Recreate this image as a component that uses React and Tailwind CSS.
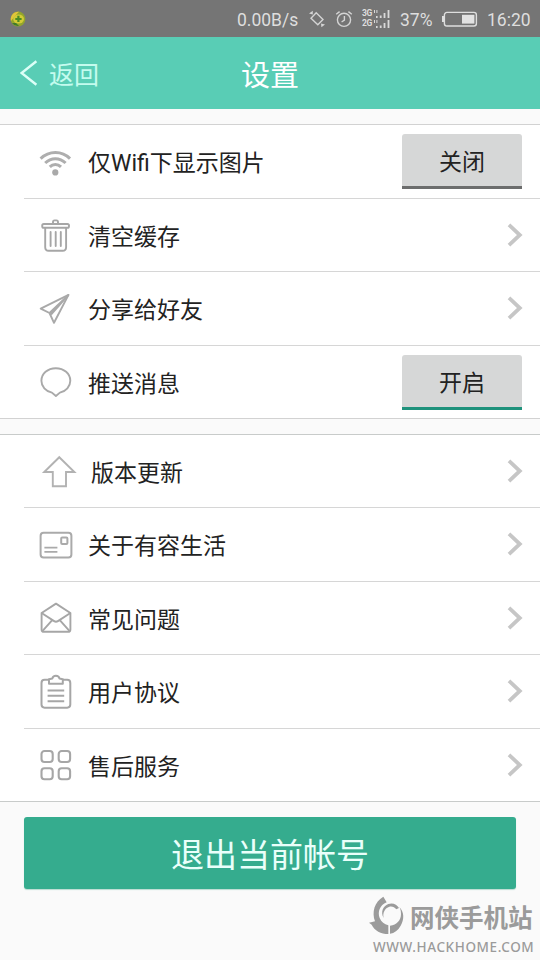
import React from 'react';

function WifiIcon() {
  return (
    <svg className="w-9 h-9" viewBox="0 0 36 36" fill="none" stroke="#aeaeae" strokeWidth="3">
      <path d="M3.6 14.6C12 6.4 25 6.4 33 14.6" />
      <path d="M8.2 19C14 13.2 22.7 13.2 28.6 19" />
      <path d="M12.8 22.9C16 19.8 20.7 19.8 24 22.9" />
      <circle cx="18.3" cy="28.4" r="3.1" fill="#a9a9a9" stroke="none" />
    </svg>
  );
}

function TrashIcon() {
  return (
    <svg className="w-9 h-9" viewBox="0 0 36 36" fill="none" stroke="#a6a6a6" strokeWidth="1.9">
      <path d="M16 6.4V5Q16 3.4 17.5 3.4H19.5Q21 3.4 21 5V6.4" />
      <rect x="5.2" y="7" width="26.8" height="3.8" rx="1.6" />
      <path d="M8.2 11V30.3Q8.2 33.8 11.7 33.8H25.6Q29.1 33.8 29.1 30.3V11" />
      <path d="M13.6 15V29M18.7 15V29M23.8 15V29" strokeLinecap="round" />
    </svg>
  );
}

function PlaneIcon() {
  return (
    <svg className="w-9 h-9" viewBox="0 0 36 36" fill="none" stroke="#a9a9a9" strokeWidth="1.9" strokeLinejoin="round">
      <path d="M31.5 3.9L3.7 17.6L12.5 22L17 31.8Z" />
      <path d="M31.5 3.9L12.5 22M31.5 3.9L14 23.5" />
    </svg>
  );
}

function BubbleIcon() {
  return (
    <svg className="w-9 h-9" viewBox="0 0 36 36" fill="none" stroke="#a9a9a9" strokeWidth="1.9" strokeLinejoin="round">
      <path d="M18.8 4.2C27 4.2 33.3 9.7 33.3 16.7C33.3 22.5 29 27.2 22.9 28.6L18.9 32L14.9 28.6C8.7 27.2 4.4 22.5 4.4 16.7C4.4 9.7 10.7 4.2 18.8 4.2Z" />
    </svg>
  );
}

function UpArrowIcon() {
  return (
    <svg className="w-9 h-9" viewBox="0 0 36 36" fill="none" stroke="#b2b2b2" strokeWidth="1.9">
      <path d="M18.3 4.2L33.4 19H25V33.2H11.8V19H3.2Z" />
    </svg>
  );
}

function CardIcon() {
  return (
    <svg className="w-9 h-9" viewBox="0 0 36 36" fill="none" stroke="#aaaaaa" strokeWidth="2">
      <rect x="3.6" y="5.8" width="30.8" height="24.6" rx="3" />
      <rect x="24.2" y="10.6" width="6.2" height="6.4" rx="1" />
      <path d="M7.4 20.6H20.4M7.4 24.9H20.4" strokeWidth="1.7" />
    </svg>
  );
}

function EnvelopeIcon() {
  return (
    <svg className="w-9 h-9" viewBox="0 0 36 36" fill="none" stroke="#a6a6a6" strokeWidth="1.9" strokeLinejoin="round">
      <path d="M4.6 13L19 3.6L33.4 13V29.4Q33.4 31.8 31 31.8H7Q4.6 31.8 4.6 29.4Z" />
      <path d="M4.6 13L17.1 21.1Q19 22.4 20.9 21.1L33.4 13M5.6 30.8L15 20.4M32.4 30.8L23 20.4" />
    </svg>
  );
}

function ClipboardIcon() {
  return (
    <svg className="w-9 h-9" viewBox="0 0 36 36" fill="none" stroke="#a6a6a6" strokeWidth="2" strokeLinejoin="round">
      <path d="M12 5.8H7.6Q4.5 5.8 4.5 8.9V30.6Q4.5 33.7 7.6 33.7H30.2Q33.3 33.7 33.3 30.6V8.9Q33.3 5.8 30.2 5.8H25.8" />
      <path d="M12 9.8V5.2L15.3 4.6Q15.9 1.8 18.9 1.8Q21.9 1.8 22.5 4.6L25.8 5.2V9.8Z" />
      <path d="M10.6 16.4H27.2M10.6 21.8H27.2M10.6 27.2H27.2" />
    </svg>
  );
}

function GridIcon() {
  return (
    <svg className="w-9 h-9" viewBox="0 0 36 36" fill="none" stroke="#a6a6a6" strokeWidth="2.1">
      <rect x="4.5" y="4" width="11.2" height="11" rx="3" />
      <rect x="21.7" y="4" width="11.4" height="11" rx="3" />
      <rect x="4.5" y="21.2" width="11.2" height="11" rx="3" />
      <rect x="21.7" y="21.2" width="11.4" height="11" rx="3" />
    </svg>
  );
}

function Chevron() {
  return (
    <svg className="w-4 h-6 mr-[17px] mb-px" viewBox="0 0 16 24" fill="none" stroke="#c6c6c6" strokeWidth="3.8">
      <path d="M2 1.8L12.8 12L2 22.2" />
    </svg>
  );
}

function StatusBar() {
  return (
    <div className="h-[37px] bg-[#757575] flex items-center text-[#dedede] text-[17.5px] font-['Roboto',sans-serif]">
      <svg className="w-4 h-4 ml-[10px]" viewBox="0 0 16 16">
        <circle cx="8" cy="8" r="7.4" fill="#93a52c" />
        <path d="M1 10A7.4 7.4 0 0 1 9 .8L5 5Z" fill="#e3c33a" />
        <ellipse cx="8.6" cy="8" rx="5.4" ry="4.6" fill="#d2cb35" />
        <path d="M2 12A7.4 7.4 0 0 0 9 15L6 12Z" fill="#3f7a2a" />
        <path d="M8.4 4.8V11M5.3 8H11.6" stroke="#4b8a24" strokeWidth="2.2" />
      </svg>
      <span className="w-[63px] ml-[211px] pt-[3px] whitespace-nowrap">0.00B/s</span>
      <svg className="w-[18px] h-[18px] ml-2" viewBox="0 0 18 18" fill="none" stroke="#d4d4d4" strokeWidth="1.4">
        <path d="M8.2 2.8L15 9.4L9.8 14.8L3 8.2Z" />
        <path d="M4.8 0.8V4.6L1 3.4ZM13 13.4L17 14.4L13.4 17.2Z" fill="#d4d4d4" stroke="none" />
      </svg>
      <svg className="w-[18px] h-[18px] ml-[9px]" viewBox="0 0 18 18" fill="none" stroke="#d4d4d4" strokeWidth="1.4">
        <circle cx="9" cy="9.8" r="6.6" />
        <path d="M9.4 6V10.2L6.6 12M1.2 4.2L4.6 1.6M16.8 4.2L13.4 1.6" />
      </svg>
      <div className="flex flex-col ml-[9px] w-7">
        {['3G', '2G'].map((label) => (
          <div key={label} className="flex items-center h-[10px]">
            <span className="w-[11px] text-[8.5px] leading-none font-bold tracking-[-0.3px]">{label}</span>
            <svg className="w-[17px] h-2" viewBox="0 0 17 8" fill="#d9d9d9">
              <path d="M1 0H2V3H1ZM3.4 0H4.4V3H3.4ZM3 6H4.6V8H3ZM6.8 5.5H8.6V8H6.8ZM10.6 3H12.4V8H10.6ZM14.6 0H16.4V8H14.6Z" />
            </svg>
          </div>
        ))}
      </div>
      <span className="w-[34px] ml-[10px] pt-[3px]">37%</span>
      <svg className="w-9 h-4 ml-[8px]" viewBox="0 0 36 16" fill="none">
        <rect x="2.4" y="1.4" width="32" height="13.6" rx="2.5" stroke="#dedede" strokeWidth="1.4" />
        <path d="M0 5H2V11H0Z" fill="#dedede" />
        <rect x="20" y="3.8" width="12.4" height="8.8" fill="#e2e2e2" />
      </svg>
      <span className="ml-[9px] pt-[3px]">16:20</span>
    </div>
  );
}

function Header() {
  return (
    <div className="h-[72px] bg-[#59cdb5] grid grid-cols-3 items-center text-white">
      <div className="flex items-center pl-5 text-[#c4fbee]">
        <svg className="w-[18px] h-7" viewBox="0 0 18 28" fill="none" stroke="#dcfff7" strokeWidth="2.4">
          <path d="M16.4 2.2L1.6 14L16.4 25.8" />
        </svg>
        <span className="ml-[11px] pt-[5px] text-[25px] leading-none">返回</span>
      </div>
      <h1 className="pt-1.5 text-[29px] leading-none text-center">设置</h1>
    </div>
  );
}

function ToggleButton({ on }) {
  return (
    <button
      className={`w-[120px] h-[55px] mr-[18px] pt-[5px] rounded-t-[3px] border-b-[3px] bg-[#d6d7d7] text-[23px] leading-none ${
        on ? 'border-[#1f927c]' : 'border-[#6c6d6d]'
      }`}
    >
      {on ? '开启' : '关闭'}
    </button>
  );
}

function Row({ icon, label, toggle, height = 'h-[74px]', last, shift }) {
  return (
    <div className={`${height} pl-6`}>
      <div className={`h-full flex items-center ${last ? '' : 'border-b border-[#d6d6d6]'}`}>
        <div className={shift ? 'ml-[17px]' : 'ml-[13px]'}>{icon}</div>
        <span className={`flex-1 pt-1 text-[23px] leading-none ${shift ? 'ml-[14px]' : 'ml-[15px]'}`}>{label}</span>
        {toggle === undefined ? <Chevron /> : <ToggleButton on={toggle} />}
      </div>
    </div>
  );
}

export default function App() {
  return (
    <div className="w-[540px] h-[960px] overflow-hidden flex flex-col bg-[#fafafa] text-[#222] font-['Roboto','Noto_Sans_CJK_SC',sans-serif]">
      <StatusBar />
      <Header />

      <div className="mt-[15px] bg-white border-y border-[#d2d2d2]">
        <Row icon={<WifiIcon />} label="仅Wifi下显示图片" toggle={false} />
        <Row icon={<TrashIcon />} label="清空缓存" height="h-[73px]" />
        <Row icon={<PlaneIcon />} label="分享给好友" />
        <Row icon={<BubbleIcon />} label="推送消息" toggle={true} height="h-[72px]" last />
      </div>

      <div className="mt-[15px] bg-white border-y border-[#c8cbca]">
        <Row icon={<UpArrowIcon />} label="版本更新" height="h-[73px]" shift />
        <Row icon={<CardIcon />} label="关于有容生活" />
        <Row icon={<EnvelopeIcon />} label="常见问题" height="h-[73px]" />
        <Row icon={<ClipboardIcon />} label="用户协议" />
        <Row icon={<GridIcon />} label="售后服务" height="h-[72px]" last />
      </div>

      <button className="shrink-0 mx-6 mt-[15px] h-[72px] pt-[4px] rounded-[3px] bg-[#35ac8e] text-[#e9fffa] text-[33px] leading-none shadow-[0_1px_1px_#b9dbd1]">
        退出当前帐号
      </button>

      <div className="mt-[7px] ml-[368px] text-[#9b9b9b]">
        <div className="flex items-center h-10">
          <svg className="w-[37px] h-10" viewBox="19 18 111 120" fill="#9b9b9b">
            <path d="M65 20L75 37C54 46 47 66 54 84C59 96 68 103 80 106V132C58 132 38 122 30 104L22 98L40 94C30 66 38 36 65 20Z" />
            <path d="M85 107C106 105 118 90 118 72C118 62 116 56 113 51C128 66 128 88 117 107C109 121 98 129 85 131Z" />
            <path d="M66 84C56 66 64 48 80 42C93 37 106 43 112 54L104 58C99 51 91 48 83 50C70 54 62 68 66 84Z" />
          </svg>
          <span className="ml-[5px] mt-1.5 text-[24.5px] leading-none font-bold whitespace-nowrap">网侠手机站</span>
        </div>
        <div className="ml-[5px] mt-[5px] text-[13.5px] leading-none font-medium tracking-[0.6px] font-['Noto_Sans',sans-serif] whitespace-nowrap">
          WWW.HACKHOME.COM
        </div>
      </div>
    </div>
  );
}
